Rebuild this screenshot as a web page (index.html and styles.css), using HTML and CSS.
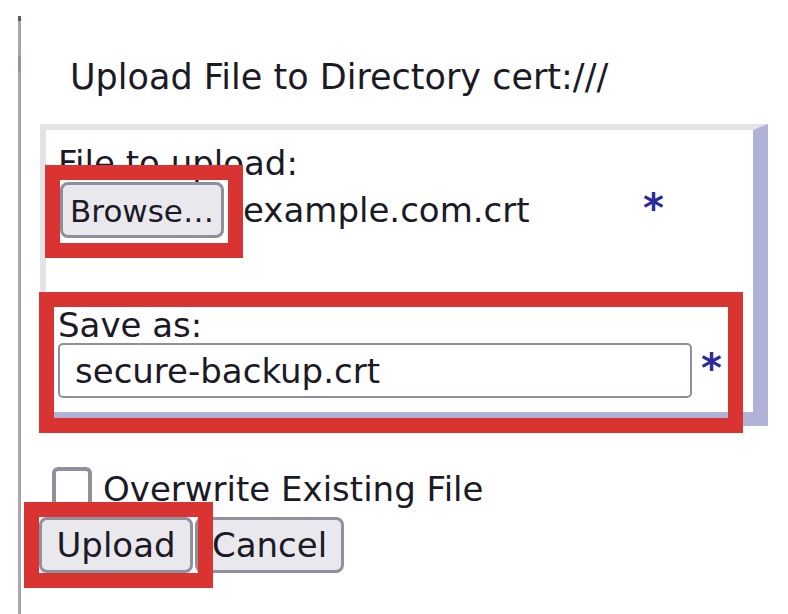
FILE: index.html
```html
<!DOCTYPE html>
<html>
<head>
<meta charset="utf-8">
<link rel="stylesheet" href="styles.css">
</head>
<body>
<div class="page">
  <div class="frame">
    <div class="title">Upload File to Directory cert:///</div>
    <div class="panel">
      <div class="label">File to upload:</div>
      <div class="file-row">
        <button class="btn btn-browse" type="button">Browse…</button>
        <span class="filename">example.com.crt</span>
        <span class="req">*</span>
      </div>
      <div class="label label-save">Save as:</div>
      <div class="save-row">
        <input class="text-input" type="text" value="secure-backup.crt">
        <span class="req req-save">*</span>
      </div>
    </div>
    <div class="check-row">
      <span class="checkbox"></span>
      <span class="check-label">Overwrite Existing File</span>
    </div>
    <div class="actions">
      <button class="btn btn-upload" type="button">Upload</button>
      <button class="btn btn-cancel" type="button">Cancel</button>
    </div>
  </div>
  <div class="mark mark-browse"></div>
  <div class="mark mark-save"></div>
  <div class="mark mark-upload"></div>
</div>
</body>
</html>
```
FILE: styles.css
```css
html, body {
  margin: 0;
  padding: 0;
  background: #ffffff;
}
body {
  font-family: "DejaVu Sans", Verdana, sans-serif;
  font-size: 34px;
  color: #1b1a26;
}
.page {
  position: relative;
  width: 788px;
  height: 614px;
  overflow: hidden;
}
.frame {
  display: flow-root;
  margin-left: 18px;
  margin-top: 16px;
  height: 598px;
  padding-left: 19px;
  border-left: 3px solid #a7a7aa;
  border-image: linear-gradient(to bottom, #4f5b78 0, #4f5b78 6px, #a7a7aa 6px, #a7a7aa 40px, #8d96a8 41px, #8d96a8 57px, #a7a7aa 58px) 1;
}
.title {
  margin-top: 42px;
  margin-left: 30px;
  line-height: 38px;
  font-size: 35px;
}
.panel {
  margin-top: 28px;
  width: 695px;
  border-top: 6px solid #e4e4e6;
  border-left: 6px solid #e4e4e6;
  border-right: 15px solid #b0b2d7;
  border-bottom: 14px solid #b0b2d7;
  padding: 14px 0 14px 12px;
}
.label {
  line-height: 38px;
}
.file-row {
  display: flex;
  align-items: center;
  height: 56px;
}
.btn {
  font-family: "DejaVu Sans", Verdana, sans-serif;
  font-size: 34px;
  color: #1b1a26;
  background: #e9e9ed;
  border: 3px solid #8f8f9d;
  border-radius: 8px;
  height: 56px;
  padding: 0;
  box-sizing: border-box;
  line-height: 1;
}
.btn-browse {
  width: 164px;
  margin-left: 2px;
  font-size: 31px;
  padding-top: 3px;
}
.filename {
  margin-left: 19px;
  width: 400px;
}
.req {
  color: #2b2c9c;
  font-weight: bold;
  font-size: 40px;
  line-height: 40px;
  align-self: flex-start;
  margin-top: 6px;
}
.label-save {
  margin-top: 69px;
  line-height: 36px;
}
.save-row {
  display: flex;
  align-items: center;
}
.text-input {
  width: 634px;
  height: 55px;
  box-sizing: border-box;
  border: 2px solid #8f8f9d;
  border-radius: 5px;
  padding: 0 0 0 15px;
  font-family: "DejaVu Sans", Verdana, sans-serif;
  font-size: 34px;
  color: #1b1a26;
  background: #fff;
}
.req-save {
  margin-left: 9px;
  align-self: center;
  margin-top: -6px;
}
.check-row {
  display: flex;
  align-items: flex-end;
  margin-top: 41px;
  margin-left: 12px;
  height: 40px;
}
.checkbox {
  width: 40px;
  height: 40px;
  box-sizing: border-box;
  border: 4px solid #8f8f9d;
  border-radius: 6px;
  background: #fff;
}
.check-label {
  margin-left: 11px;
  line-height: 38px;
  margin-bottom: -1px;
}
.actions {
  display: flex;
  gap: 2px;
  margin-top: 10px;
  margin-left: -1px;
}
.btn-upload {
  width: 154px;
}
.btn-cancel {
  width: 149px;
}
.mark {
  position: absolute;
  border: 15px solid #d93431;
  box-sizing: border-box;
}
.mark-browse {
  left: 45px;
  top: 165px;
  width: 198px;
  height: 93px;
}
.mark-save {
  left: 39px;
  top: 292px;
  width: 704px;
  height: 141px;
}
.mark-upload {
  left: 24px;
  top: 502px;
  width: 189px;
  height: 86px;
}
```
